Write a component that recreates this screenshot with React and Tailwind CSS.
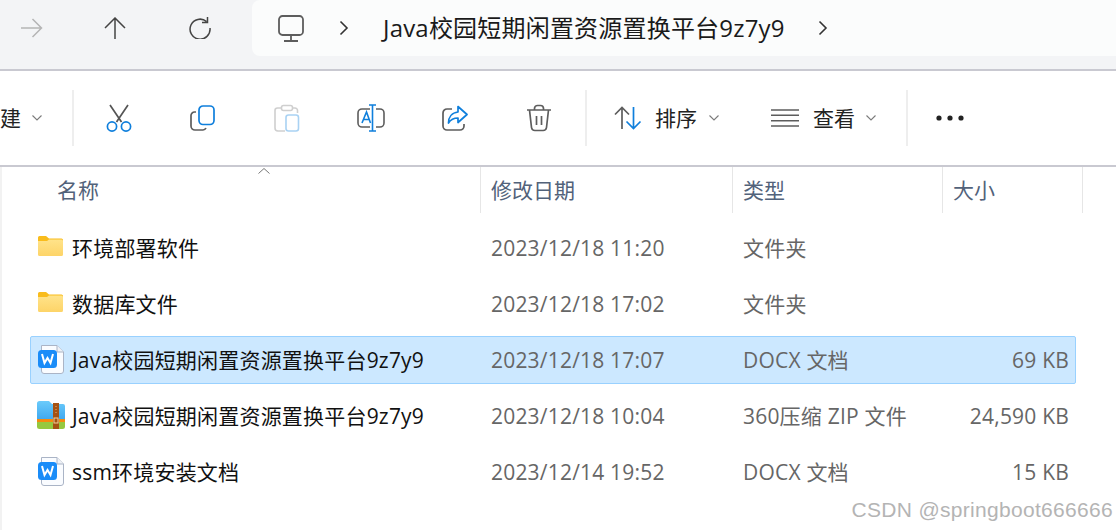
const CJK = { fontFamily: '"Open Sans","Noto Sans CJK SC",sans-serif' };

function Chevron({ className }) {
  return (
    <svg viewBox="0 0 10 6" className={className} fill="none" stroke="#7b7b7b" strokeWidth="1.1">
      <path d="M0.5 0.5 5 5 9.5 0.5" />
    </svg>
  );
}
function Crumb({ className }) {
  return (
    <svg viewBox="0 0 10 16" className={className} fill="none" stroke="#333" strokeWidth="1.6">
      <path d="M1.5 1.5 8 8 1.5 14.5" />
    </svg>
  );
}
function Cut({ className }) {
  return (
    <svg viewBox="0 0 26 28" className={className} fill="none" strokeWidth="1.7">
      <path d="M4 1 15.5 18M22 1 10.5 18" stroke="#555" />
      <circle cx="6" cy="22.5" r="4.6" stroke="#0f7fdc" />
      <circle cx="20" cy="22.5" r="4.6" stroke="#0f7fdc" />
    </svg>
  );
}
function Copy({ className }) {
  return (
    <svg viewBox="0 0 26 26" className={className} fill="none" strokeWidth="1.7">
      <path d="M6 7H4.5A3.5 3.5 0 0 0 1 10.500V21a4 4 0 0 0 4 4h8a3.500 3.500 0 0 0 3-2" stroke="#5d5d5d" />
      <rect x="9" y="1" width="15" height="18.500" rx="4" stroke="#0f7fdc" />
    </svg>
  );
}
function Paste({ className }) {
  return (
    <svg viewBox="0 0 26 28" className={className} fill="none" strokeWidth="1.6">
      <path d="M8 4H3.500A2.500 2.500 0 0 0 1 6.500V24a3 3 0 0 0 3 3h7M18 4h3a2.500 2.500 0 0 1 2.500 2.500V9" stroke="#cfcfcf" />
      <rect x="7.500" y="1.500" width="11" height="5" rx="2" stroke="#cfcfcf" />
      <rect x="12" y="11" width="12.500" height="16" rx="2.500" stroke="#a9d2f3" />
    </svg>
  );
}
function Rename({ className }) {
  return (
    <svg viewBox="0 0 28 28" className={className} fill="none" strokeWidth="1.6">
      <path d="M13 5H5a4 4 0 0 0-4 4v10a4 4 0 0 0 4 4h8M19 5h4a4 4 0 0 1 4 4v10a4 4 0 0 1-4 4h-4" stroke="#5d5d5d" />
      <path d="M12 1h7M15.500 1v26M12 27h7M5 19 9.500 8l4 11M6.500 15.500h6" stroke="#0f7fdc" />
    </svg>
  );
}
function Share({ className }) {
  return (
    <svg viewBox="0 0 26 26" className={className} fill="none" strokeWidth="1.7">
      <path d="M10 4H5a4 4 0 0 0-4 4v13a4 4 0 0 0 4 4h13a4 4 0 0 0 4-4v-2" stroke="#5d5d5d" />
      <path d="M16 1.500 25 9.500 16 17.500V13c-4 0-7 1-9.500 5 0-6 3.500-10.500 9.500-11z" stroke="#0f7fdc" strokeLinejoin="round" />
    </svg>
  );
}
function Trash({ className }) {
  return (
    <svg viewBox="0 0 26 28" className={className} fill="none" stroke="#5d5d5d" strokeWidth="1.7">
      <path d="M1 6h24M8.500 6V4.500a3 3 0 0 1 3-3h3a3 3 0 0 1 3 3V6M3.500 6l2 17.500a3.500 3.500 0 0 0 3.500 3h8a3.500 3.500 0 0 0 3.500-3l2-17.500M10.500 12v9M15.500 12v9" />
    </svg>
  );
}
function Sort({ className }) {
  return (
    <svg viewBox="0 0 28 24" className={className} fill="none" strokeWidth="1.7">
      <path d="M8 23V1.500M1 8.500l7-7 7 7" stroke="#5d5d5d" />
      <path d="M19.500 1v21.500M12.500 15.500l7 7 7-7" stroke="#0f7fdc" />
    </svg>
  );
}
function ViewIcon({ className }) {
  return (
    <svg viewBox="0 0 28 18" className={className} fill="none" stroke="#5d5d5d" strokeWidth="1.4">
      <path d="M0 1h28M0 6.300h28M0 11.700h28M0 17h28" />
    </svg>
  );
}
function Dots({ className }) {
  return (
    <svg viewBox="0 0 28 6" className={className} fill="#222">
      <circle cx="3" cy="3" r="2.600" />
      <circle cx="14" cy="3" r="2.600" />
      <circle cx="25" cy="3" r="2.600" />
    </svg>
  );
}
function Folder() {
  return (
    <svg viewBox="0 0 25 20" className="w-[25px] h-[20px] ml-[1px] mb-[6px]">
      <defs>
        <linearGradient id="fld" x1="0" y1="0" x2="0" y2="1">
          <stop offset="0" stopColor="#ffe38a" />
          <stop offset="1" stopColor="#fdd468" />
        </linearGradient>
      </defs>
      <path d="M0 1.500A1.500 1.500 0 0 1 1.500 0H8l3 2.500h12.500A1.500 1.500 0 0 1 25 4v3H0z" fill="#f9bc1c" />
      <path d="M0 5h9l2-1.500h12.500A1.500 1.500 0 0 1 25 5v13.500a1.500 1.500 0 0 1-1.500 1.500h-22A1.500 1.500 0 0 1 0 18.500z" fill="url(#fld)" />
    </svg>
  );
}
function Wps() {
  return (
    <svg viewBox="0 0 26 29" className="w-[26px] h-[29px] ml-[1px] mb-[4px]">
      <path d="M3.500 .5h15.500l6.500 6.500V26a2.500 2.500 0 0 1-2.500 2.500H6A2.500 2.500 0 0 1 3.500 26z" fill="#fafcff" stroke="#aab4c6" />
      <path d="M19 .5V7h6.500" fill="#eef1f6" stroke="#aab4c6" />
      <rect x="0" y="5" width="19" height="18" rx="3.500" fill="#1a8cf8" />
      <path d="M4 9 6.500 18 9.500 13 12.500 18 15 9" fill="none" stroke="#fff" strokeWidth="2" strokeLinejoin="miter" />
    </svg>
  );
}
function Zip() {
  return (
    <svg viewBox="0 0 28 28" className="w-[28px] h-[28px] mb-[5px]">
      <defs>
        <linearGradient id="zb" x1="0" y1="0" x2="0" y2="1">
          <stop offset="0" stopColor="#6bcbfb" />
          <stop offset="1" stopColor="#3ea7ef" />
        </linearGradient>
      </defs>
      <path d="M0 2.500A2.500 2.500 0 0 1 2.500 0H12l3 3h11a2 2 0 0 1 2 2v14H0z" fill="url(#zb)" />
      <rect x="0" y="18" width="28" height="4" fill="#f58a0f" />
      <path d="M0 21h28v4.500a2.500 2.500 0 0 1-2.500 2.500h-23A2.500 2.500 0 0 1 0 25.500z" fill="#96c83f" />
      <rect x="16" y="2" width="6" height="26" fill="#a55213" />
      <rect x="17" y="17" width="4" height="5" fill="none" stroke="#f2cf9c" strokeWidth="1" />
      <path d="M19 5v1M19 8v1M19 11v1" stroke="#e5b478" strokeWidth="1" />
    </svg>
  );
}

const rows = [
  { icon: <Folder />, name: '环境部署软件', date: '2023/12/18 11:20', type: '文件夹', size: '' },
  { icon: <Folder />, name: '数据库文件', date: '2023/12/18 17:02', type: '文件夹', size: '' },
  { icon: <Wps />, name: 'Java校园短期闲置资源置换平台9z7y9', date: '2023/12/18 17:07', type: 'DOCX 文档', size: '69 KB', selected: true },
  { icon: <Zip />, name: 'Java校园短期闲置资源置换平台9z7y9', date: '2023/12/18 10:04', type: '360压缩 ZIP 文件', size: '24,590 KB' },
  { icon: <Wps />, name: 'ssm环境安装文档', date: '2023/12/14 19:52', type: 'DOCX 文档', size: '15 KB' },
];

function Row({ r }) {
  return (
    <div className={`ml-[30px] w-[1046px] h-[48px] mb-[8px] pt-[2px] flex items-center border rounded-[2px] text-[21px] tracking-[0.2px] ${r.selected ? 'bg-[#cce8ff] border-[#99d1ff]' : 'border-transparent'}`}>
      <div className="w-[41px] pl-[6px] flex items-center shrink-0">{r.icon}</div>
      <div className="w-[419px] shrink-0 text-[#111] whitespace-nowrap">{r.name}</div>
      <div className="w-[252px] shrink-0 text-[#666] whitespace-nowrap">{r.date}</div>
      <div className="flex-1 text-[#666] whitespace-nowrap">{r.type}</div>
      <div className="w-[150px] shrink-0 pr-[6px] text-right text-[#666] whitespace-nowrap">{r.size}</div>
    </div>
  );
}

function Sep({ className }) {
  return <div className={`w-[2px] h-[56px] bg-[#eeeeee] shrink-0 ${className}`} />;
}

export default function App() {
  return (
    <div className="relative w-[1116px] h-[530px] overflow-hidden bg-white" style={CJK}>
      {/* navigation bar */}
      <div className="h-[69px] bg-[#f3f4f6] flex items-start">
        <div className="h-[56px] flex items-center shrink-0">
          <svg viewBox="0 0 22 20" className="w-[22px] h-[20px] ml-[21px]" fill="none" stroke="#b5b5b5" strokeWidth="1.500"><path d="M0 10h20.500M11.500 1l9 9-9 9" /></svg>
          <svg viewBox="0 0 22 22" className="w-[22px] h-[22px] ml-[61px]" fill="none" stroke="#444" strokeWidth="1.500"><path d="M11 22V1M1 11 11 1l10 10" /></svg>
          <svg viewBox="0 0 22 22" className="w-[22px] h-[22px] ml-[63px]" fill="none" stroke="#444" strokeWidth="1.500"><path d="M17.500 4.500A10 10 0 1 0 21 11M18.500 0v5.500H13" /></svg>
        </div>
        <div className="ml-[41px] flex-1 h-[56px] bg-[#fbfcfc] rounded-bl-[8px] rounded-tl-[8px] flex items-center">
          <svg viewBox="0 0 26 27" className="w-[26px] h-[27px] ml-[26px]" fill="none" stroke="#5d5d5d" strokeWidth="1.800">
            <rect x="1" y="1" width="24" height="19" rx="3.500" />
            <path d="M13 20v5M6 26h14" />
          </svg>
          <Crumb className="w-[10px] h-[16px] ml-[35px]" />
          <span className="ml-[34px] text-[24px] text-[#1a1a1a] whitespace-nowrap tracking-[0.2px]">Java校园短期闲置资源置换平台9z7y9</span>
          <Crumb className="w-[10px] h-[16px] ml-[33px]" />
        </div>
      </div>
      <div className="h-[2px] bg-[#c9c9d1]" />

      {/* command bar */}
      <div className="h-[94px] flex items-center">
        <span className="text-[21px] text-[#222] w-[21px] shrink-0 leading-none">建</span>
        <Chevron className="w-[10px] h-[6px] ml-[11px]" />
        <Sep className="ml-[30px]" />
        <Cut className="w-[26px] h-[28px] ml-[32px]" />
        <Copy className="w-[26px] h-[26px] ml-[58px]" />
        <Paste className="w-[26px] h-[28px] ml-[58px]" />
        <Rename className="w-[28px] h-[28px] ml-[57px]" />
        <Share className="w-[26px] h-[26px] ml-[57px]" />
        <Trash className="w-[26px] h-[28px] ml-[58px]" />
        <Sep className="ml-[33px]" />
        <Sort className="w-[28px] h-[24px] ml-[27px]" />
        <span className="ml-[13px] text-[21px] text-[#222] leading-none whitespace-nowrap">排序</span>
        <Chevron className="w-[10px] h-[6px] ml-[12px]" />
        <ViewIcon className="w-[28px] h-[18px] ml-[52px]" />
        <span className="ml-[14px] text-[21px] text-[#222] leading-none whitespace-nowrap">查看</span>
        <Chevron className="w-[10px] h-[6px] ml-[11px]" />
        <Sep className="ml-[30px]" />
        <Dots className="w-[28px] h-[6px] ml-[28px]" />
      </div>
      <div className="h-[2px] bg-[#c9c9d1]" />

      {/* list */}
      <div className="relative h-[363px] border-l-2 border-[#f2f2f2]">
        <div className="relative h-[46px] flex text-[21px] text-[#52627a]">
          <svg viewBox="0 0 12 6" className="absolute left-[256px] top-[1px] w-[12px] h-[6px]" fill="none" stroke="#777" strokeWidth="1"><path d="M.5 5.500 6 .5l5.500 5" /></svg>
          <div className="w-[479px] h-[46px] pl-[55px] pt-[2px] flex items-center border-r border-[#e6e6e6] shrink-0">名称</div>
          <div className="w-[252px] h-[46px] pl-[10px] pt-[2px] flex items-center border-r border-[#e6e6e6] shrink-0">修改日期</div>
          <div className="w-[210px] h-[46px] pl-[10px] pt-[2px] flex items-center border-r border-[#e6e6e6] shrink-0">类型</div>
          <div className="w-[140px] h-[46px] pl-[10px] pt-[2px] flex items-center border-r border-[#e6e6e6] shrink-0">大小</div>
        </div>
        <div className="pt-[11px] -ml-[2px]">
          {rows.map((r, i) => <Row key={i} r={r} />)}
        </div>
      </div>

      {/* watermark */}
      <div className="absolute right-[3px] bottom-[7px] text-[21px] tracking-[0.3px] leading-[26px] text-[#b4b4b4] whitespace-nowrap bg-white/70" style={{ fontFamily: '"Liberation Sans",sans-serif' }}>CSDN @springboot666666</div>
    </div>
  );
}
